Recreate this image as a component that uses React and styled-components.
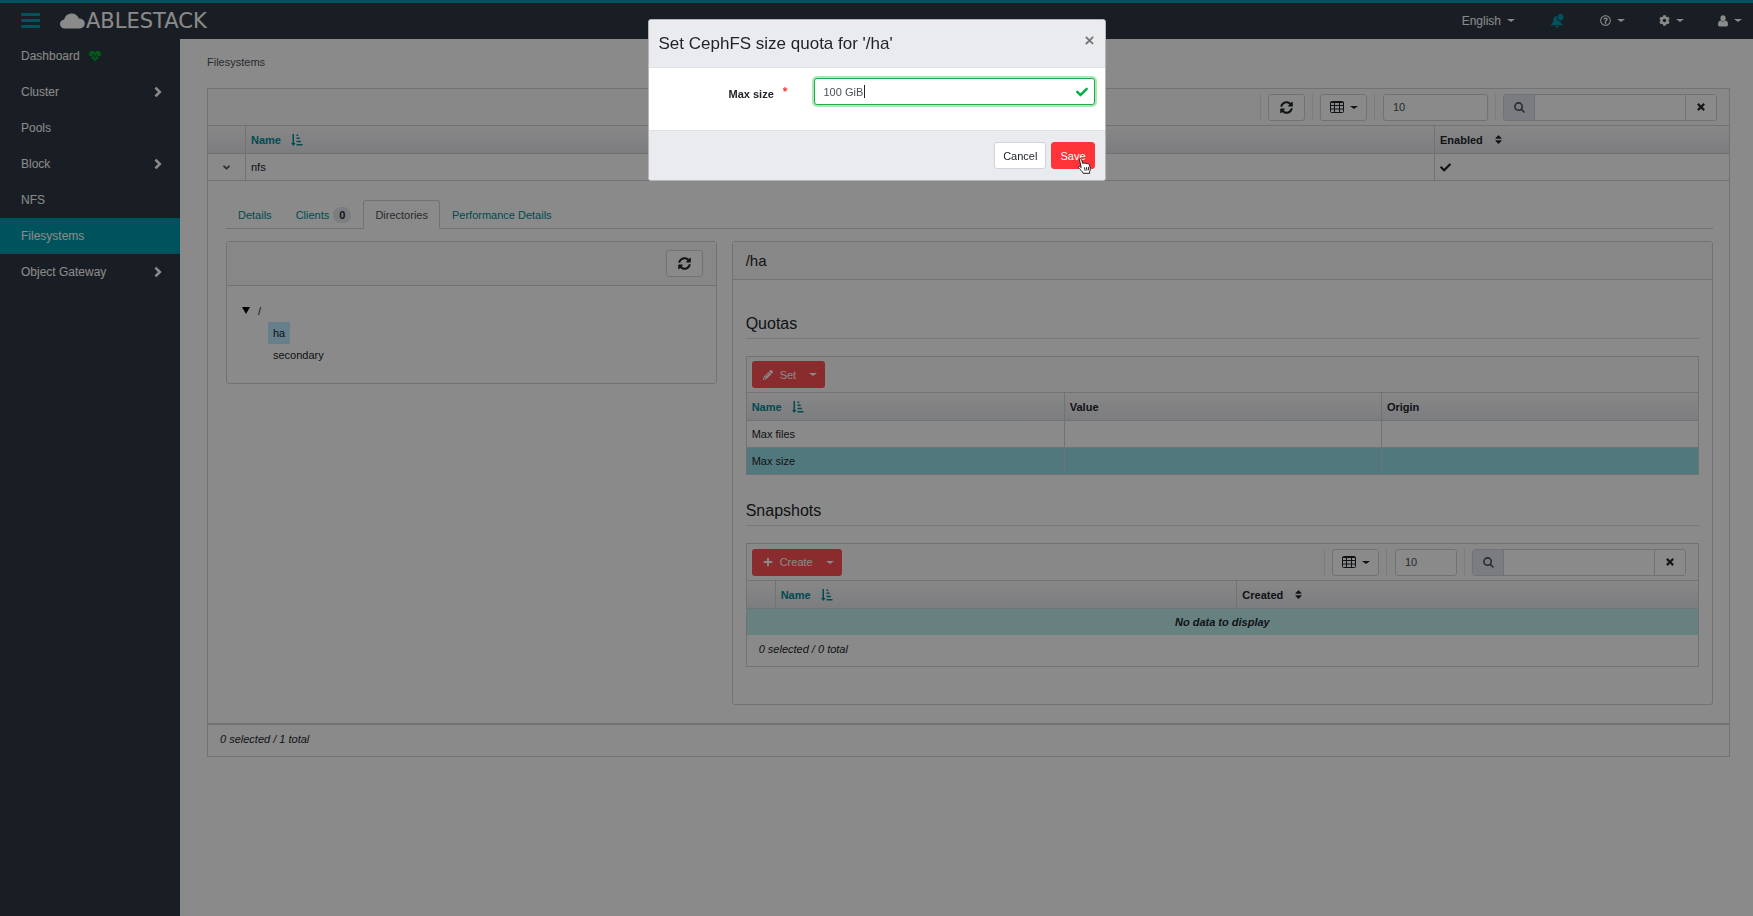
import React from 'react';
import styled, { createGlobalStyle, css } from 'styled-components';
import {
  FaHeartbeat, FaSyncAlt, FaRegQuestionCircle, FaCog, FaCheck, FaSort,
  FaPencilAlt, FaPlus, FaTimes, FaAngleDown,
} from 'react-icons/fa';

const c = {
  teal: '#0098aa',
  link: '#008a96',
  dark: '#2f3944',
  border: '#d0d5da',
  text: '#212529',
  danger: '#ff5056',
};

const GlobalStyle = createGlobalStyle`
  *, *::before, *::after { box-sizing: border-box; }
  body {
    margin: 0;
    background: #fff;
    color: ${c.text};
    font: 11px/16px "Liberation Sans", Arial, sans-serif;
  }
  button, input { font: inherit; color: inherit; margin: 0; }
  ul { list-style: none; margin: 0; padding: 0; }
  a { text-decoration: none; }
  svg { display: block; flex: none; }
`;

const Page = styled.div`
  display: flex;
  flex-direction: column;
  min-height: 100vh;
`;

/* ---- top bar ---- */
const TopBar = styled.header`
  display: flex;
  align-items: center;
  height: 38px;
  padding: 0 11px 0 21px;
  border-top: 3px solid ${c.teal};
  background: ${c.dark};
  color: #fff;
`;
const MenuToggle = styled.button`
  display: flex;
  flex-direction: column;
  gap: 3px;
  width: 19px;
  padding: 0;
  border: 0;
  background: none;
  span { height: 3px; background: ${c.teal}; border-radius: 1px; }
`;
const Brand = styled.a`
  display: flex;
  align-items: center;
  gap: 1px;
  margin: 0 auto 0 20px;
  color: #fff;
  font: 21px/24px "DejaVu Sans", sans-serif;
`;
const TopNav = styled.nav`
  display: flex;
  align-items: center;
  font-size: 12px;
`;
const TopItem = styled.button`
  display: flex;
  align-items: center;
  gap: 6px;
  height: 24px;
  margin-left: ${(p) => (p.$wide ? 36 : 34)}px;
  padding: 0;
  border: 0;
  background: none;
  color: ${(p) => (p.$accent ? c.teal : '#fff')};
`;
const Caret = styled.span`
  border: 0 solid transparent;
  border-width: 3px 4px 0;
  border-top-color: currentColor;
`;

/* ---- side bar ---- */
const Columns = styled.div`
  display: flex;
  flex: 1;
`;
const SideBar = styled.nav`
  flex: 0 0 180px;
  background: ${c.dark};
`;
const SideLink = styled.a`
  display: flex;
  align-items: center;
  gap: 9px;
  height: 36px;
  padding: 0 18px 0 21px;
  font-size: 12px;
  color: #fff;
  background: ${(p) => (p.$active ? c.teal : 'transparent')};
  svg.end { margin-left: auto; }
`;

/* ---- content ---- */
const Main = styled.main`
  flex: 1;
  min-width: 0;
  padding: 14px 23px 24px 27px;
  border-top: 1px solid ${c.dark};
`;
const Breadcrumb = styled.div`
  height: 35px;
  color: #495057;
  line-height: 18px;
`;
const TableBox = styled.section`
  border: 1px solid ${c.border};
  border-bottom-width: ${(p) => (p.$flush ? 0 : 1)}px;
`;
const ToolBar = styled.div`
  display: flex;
  align-items: center;
  justify-content: ${(p) => (p.$end ? 'flex-end' : 'space-between')};
  height: ${(p) => (p.$compact ? 36 : 37)}px;
  padding: 0 12px 0 5px;
  background: #fcfcfc;
  border-bottom: 1px solid ${c.border};
`;
const Tools = styled.div`
  display: flex;
  align-items: center;
  gap: 7px;
`;
const Divider = styled.span`
  width: 1px;
  height: 27px;
  background: #e2e6ea;
`;
const Button = styled.button`
  display: inline-flex;
  align-items: center;
  justify-content: center;
  gap: 6px;
  height: 27px;
  width: ${(p) => (p.$width ? `${p.$width}px` : 'auto')};
  padding: 0 8px;
  border: 1px solid ${c.border};
  border-radius: 3px;
  background: #fff;
  color: #212529;
`;
const PrimaryButton = styled(Button)`
  border-color: #ff3438;
  background: #ff3438;
  color: #fff;
`;
const PageSize = styled.input`
  width: ${(p) => p.$width}px;
  height: 27px;
  padding: 0 9px;
  border: 1px solid ${c.border};
  border-radius: 3px;
  background: #fff;
  color: #495057;
  margin-left: 1px;
`;
const SearchGroup = styled.div`
  display: flex;
  height: 27px;
  border: 1px solid ${c.border};
  border-radius: 3px;
  overflow: hidden;
  label {
    display: flex;
    align-items: center;
    justify-content: center;
    width: 31px;
    background: #e3e5ea;
    color: #495057;
    border-right: 1px solid ${c.border};
  }
  input { width: 150px; border: 0; padding: 0 8px; background: #fff; }
  button {
    display: flex;
    align-items: center;
    justify-content: center;
    width: 31px;
    padding: 0;
    border: 0;
    border-left: 1px solid ${c.border};
    background: #fff;
  }
`;
const SplitButton = styled.div`
  display: flex;
  height: 27px;
  border-radius: 3px;
  overflow: hidden;
  button {
    display: flex;
    align-items: center;
    gap: 7px;
    padding: 0 6px 0 11px;
    border: 0;
    background: ${c.danger};
    color: #fff;
  }
  button + button { padding: 0 8px 0 7px; }
`;
const Table = styled.table`
  width: 100%;
  table-layout: fixed;
  border-collapse: separate;
  border-spacing: 0;
`;
const Th = styled.th`
  height: 28px;
  width: ${(p) => (p.$width ? `${p.$width}px` : 'auto')};
  padding: 0 5px;
  text-align: left;
  border-bottom: 1px solid ${c.border};
  background: linear-gradient(#fafafa, #e6e7ec);
  color: ${(p) => (p.$sorted ? c.link : c.text)};
  & + & { border-left: 1px solid ${c.border}; }
`;
const SortLabel = styled.span`
  display: inline-flex;
  align-items: center;
  gap: 10px;
`;
const Td = styled.td`
  height: 27px;
  padding: ${(p) => (p.$details ? '0' : '0 5px')};
  border-bottom: 1px solid ${c.border};
  & + & { border-left: 1px solid ${c.border}; }
`;
const Tr = styled.tr`
  background: ${(p) => (p.$selected ? '#96dee7' : '#fff')};
`;
const EmptyCell = styled.td`
  height: 26px;
  padding: 0;
  background: #bfedec;
  text-align: center;
  font-weight: bold;
  font-style: italic;
`;
const Expander = styled.button`
  display: flex;
  justify-content: center;
  width: 100%;
  padding: 0;
  border: 0;
  background: none;
  color: #495057;
`;
const TableFooter = styled.div`
  height: 31px;
  padding: 6px 12px 0;
  font-style: italic;
`;

/* ---- expanded row ---- */
const Details = styled.div`
  padding: 19px 16px 18px 18px;
  border-bottom: 1px solid ${c.border};
`;
const Tabs = styled.div`
  display: flex;
  height: 29px;
  border-bottom: 1px solid ${c.border};
`;
const Tab = styled.button`
  display: flex;
  align-items: center;
  gap: 4px;
  height: 29px;
  padding: 0 11px;
  border: 1px solid transparent;
  border-radius: 3px 3px 0 0;
  background: none;
  color: ${c.link};
  ${(p) => p.$active && css`
    color: #495057;
    background: #fff;
    border-color: ${c.border} ${c.border} #fff;
  `}
`;
const Badge = styled.span`
  padding: 0 6px;
  border-radius: 8px;
  background: #e6e7ec;
  color: ${c.text};
  font-weight: bold;
`;
const Cards = styled.div`
  display: grid;
  grid-template-columns: minmax(0, 1fr) minmax(0, 2fr);
  gap: 15px;
  align-items: start;
  margin-top: 12px;
`;
const Card = styled.section`
  border: 1px solid ${c.border};
  border-radius: 3px;
`;
const CardHeader = styled.header`
  display: flex;
  align-items: center;
  justify-content: ${(p) => (p.$end ? 'flex-end' : 'flex-start')};
  padding: ${(p) => (p.$end ? 8 : 9)}px 13px;
  border-bottom: 1px solid ${c.border};
  background: #f9f9f9;
  font-size: 15px;
  line-height: 19px;
`;
const CardBody = styled.div`
  padding: 34px 13px 37px;
`;
const Legend = styled.h2`
  margin: 0 0 17px;
  padding-bottom: 5px;
  border-bottom: 1px solid #dadee2;
  font-size: 16px;
  font-weight: normal;
  line-height: 19px;
`;
const Group = styled.div`
  & + & { margin-top: 26px; }
`;
const Tree = styled.ul`
  padding: 13px 15px 17px;
  line-height: 22px;
  ul { padding-left: 26px; }
`;
const TreeNode = styled.button`
  display: inline-flex;
  align-items: center;
  gap: 8px;
  height: 22px;
  padding: ${(p) => (p.$root ? '0' : '0 5px')};
  border: 0;
  background: ${(p) => (p.$selected ? '#beebff' : 'none')};
  color: ${c.text};
`;
const Arrow = styled.span`
  border: 4px solid transparent;
  border-top: 7px solid #000;
  border-bottom: 0;
`;

/* ---- dialog ---- */
const Backdrop = styled.div`
  position: fixed;
  inset: 0;
  display: flex;
  align-items: flex-start;
  justify-content: center;
  padding-top: 19px;
  background: rgba(0, 0, 0, 0.46);
`;
const Dialog = styled.form`
  width: 458px;
  border: 1px solid #b4b6ba;
  border-radius: 3px;
  background: #fff;
  overflow: hidden;
`;
const DialogHeader = styled.header`
  display: flex;
  justify-content: space-between;
  height: 48px;
  padding: 11px 10px;
  background: #eaebef;
  border-bottom: 1px solid #dee2e6;
  h1 {
    margin: 0;
    font-size: 17px;
    font-weight: 500;
    line-height: 26px;
  }
`;
const Close = styled.button`
  height: 20px;
  padding: 0;
  border: 0;
  background: none;
  color: #777;
  font-size: 17px;
  font-weight: bold;
  line-height: 20px;
`;
const DialogBody = styled.div`
  display: flex;
  align-items: flex-start;
  padding: 10px 10px 25px 80px;
  label {
    width: 85px;
    padding-top: 8px;
    font-weight: bold;
  }
  sup { margin-left: 6px; color: #ff3438; font-size: 12px; line-height: 0; vertical-align: 2px; }
`;
const ValidField = styled.div`
  position: relative;
  flex: 1;
  input {
    display: block;
    width: 100%;
    height: 27px;
    padding: 0 9px;
    border: 1px solid #28a745;
    border-radius: 3px;
    outline: 0;
    box-shadow: 0 0 0 2px rgba(40, 200, 80, 0.4);
    color: #495057;
  }
  svg { position: absolute; right: 7px; top: 8px; color: #00b140; }
`;
const TextCaret = styled.i`
  position: absolute;
  left: 50px;
  top: 7px;
  width: 1px;
  height: 13px;
  background: #212529;
`;
const DialogFooter = styled.footer`
  display: flex;
  align-items: center;
  justify-content: flex-end;
  gap: 5px;
  height: 50px;
  padding: 0 10px;
  border-top: 1px solid #dee2e6;
  background: #eaebef;
`;
const SaveWrap = styled.div`
  position: relative;
  display: flex;
  svg { position: absolute; left: 26px; top: 16px; }
`;

/* ---- drawings ---- */
const Cloud = () => (
  <svg width="25" height="16" viewBox="0 0 25 16" fill="currentColor" aria-hidden="true">
    <path d="M5 15.500C2 15.500 0 13.500 0 11C0 8.500 1.800 6.800 4.200 6.500C5 2.800 8 0.500 11.800 0.500C15.300 0.500 17.800 2.500 18.800 5.500C22.500 5.600 24.800 7.600 24.800 10.600C24.800 13.500 22.700 15.500 19.800 15.500Z" />
  </svg>
);
const Bell = () => (
  <svg width="13" height="14" viewBox="0 0 13 14" fill="currentColor" aria-hidden="true">
    <path d="M5.500 2C3 2.300 2.200 4.200 2.100 6.500C2 8.700 1.300 9.600 0 10.600V11.300H11.500V10.600C10.300 9.700 9.600 8.900 9.400 7.300C7 7.400 5.300 5.200 5.900 3Z" />
    <path d="M4.200 12H7.400C7.400 13 6.700 13.600 5.800 13.600S4.200 13 4.200 12Z" />
    <ellipse cx="9.600" cy="3.200" rx="2.800" ry="3.100" />
  </svg>
);
const User = () => (
  <svg width="10" height="12" viewBox="0 0 10 12" fill="currentColor" aria-hidden="true">
    <ellipse cx="5" cy="3.200" rx="2.600" ry="3" />
    <path d="M2.400 5.400C3.800 6.900 6.200 6.900 7.600 5.400C9.300 5.700 10 7.400 10 9.400C10 10.800 9.200 11.500 8 11.500H2C0.800 11.500 0 10.800 0 9.400C0 7.400 0.700 5.700 2.400 5.400Z" />
  </svg>
);
const Chevron = () => (
  <svg className="end" width="8" height="12" viewBox="0 0 8 12" fill="none" stroke="currentColor" strokeWidth="2.600" aria-hidden="true">
    <path d="M1.400 1.600L5.800 6L1.400 10.400" />
  </svg>
);
const SortAsc = () => (
  <svg width="12" height="12" viewBox="0 0 12 12" fill="currentColor" aria-hidden="true">
    <path d="M1.500 0H3V9H4.600L2.250 12L0 9H1.500Z" />
    <path d="M5.500 0.500H7.200V2H5.500ZM5.500 3.600H8.600V5.100H5.500ZM5.500 6.700H10V8.200H5.500ZM5.500 9.900H11.500V11.400H5.500Z" />
  </svg>
);
const Grid = () => (
  <svg width="14" height="12" viewBox="0 0 14 12" fill="none" stroke="currentColor" aria-hidden="true">
    <rect x="0.500" y="0.500" width="13" height="11" rx="1" />
    <path d="M0.500 1.500H13.500M0.500 4.500H13.500M0.500 8H13.500M4.500 1V11.500M9.500 1V11.500" />
  </svg>
);
const Magnifier = () => (
  <svg width="11" height="11" viewBox="0 0 11 11" fill="none" stroke="currentColor" strokeWidth="1.600" strokeLinecap="round" aria-hidden="true">
    <circle cx="4.600" cy="4.600" r="3.700" />
    <path d="M7.400 7.400L10 10" />
  </svg>
);
const HandCursor = () => (
  <svg width="15" height="16" viewBox="0 0 15 16" aria-hidden="true">
    <path
      d="M4.200 9.600L2.500 1.900C2.300 0.400 4.200 0.200 4.600 1.500L5.800 5.600C6.200 4.900 7.700 4.900 8 5.700C8.500 5 9.900 5.100 10.200 5.900C11 5.400 12.200 5.800 12.400 6.700L13.300 10.200C13.600 11.500 12.900 12.700 12.600 13.700V15.300H6.200C5.300 13.100 3.500 12.100 1.700 10.100C0.700 8.800 2.300 7.900 3.200 8.700Z"
      fill="#fff" stroke="#222" strokeWidth="1"
    />
    <path d="M7.500 9.300L8.100 12.700M9.500 9.200L9.900 12.600M11.400 9L11.700 12.300" stroke="#222" fill="none" />
  </svg>
);

const Search = ({ id }) => (
  <SearchGroup>
    <label htmlFor={id} aria-label="Search"><Magnifier /></label>
    <input id={id} type="text" />
    <button type="button" aria-label="Clear search"><FaTimes size={10} stroke="currentColor" strokeWidth="30" /></button>
  </SearchGroup>
);
const ColumnsButton = () => (
  <Button type="button" $width={47} aria-label="Columns"><Grid /><Caret /></Button>
);
const SortedName = () => (
  <SortLabel>Name <SortAsc /></SortLabel>
);

const menu = [
  { label: 'Dashboard', health: true },
  { label: 'Cluster', sub: true },
  { label: 'Pools' },
  { label: 'Block', sub: true },
  { label: 'NFS' },
  { label: 'Filesystems', active: true },
  { label: 'Object Gateway', sub: true },
];

function QuotaTable() {
  return (
    <TableBox $flush>
      <ToolBar $compact>
        <SplitButton>
          <button type="button"><FaPencilAlt size={10} />Set</button>
          <button type="button" aria-label="More quota actions"><Caret /></button>
        </SplitButton>
      </ToolBar>
      <Table>
        <thead>
          <tr><Th $sorted><SortedName /></Th><Th>Value</Th><Th>Origin</Th></tr>
        </thead>
        <tbody>
          <Tr><Td>Max files</Td><Td /><Td /></Tr>
          <Tr $selected><Td>Max size</Td><Td /><Td /></Tr>
        </tbody>
      </Table>
    </TableBox>
  );
}

function SnapshotTable() {
  return (
    <TableBox>
      <ToolBar>
        <SplitButton>
          <button type="button"><FaPlus size={10} />Create</button>
          <button type="button" aria-label="More snapshot actions"><Caret /></button>
        </SplitButton>
        <Tools>
          <Divider /><ColumnsButton />
          <Divider /><PageSize $width={62} aria-label="Rows per page" defaultValue="10" />
          <Divider /><Search id="snapshot-search" />
        </Tools>
      </ToolBar>
      <Table>
        <thead>
          <tr>
            <Th $width={28} aria-label="Selection" />
            <Th $sorted><SortedName /></Th>
            <Th><SortLabel>Created <FaSort size={11} /></SortLabel></Th>
          </tr>
        </thead>
        <tbody>
          <tr><EmptyCell colSpan={3}>No data to display</EmptyCell></tr>
        </tbody>
      </Table>
      <TableFooter>0 selected / 0 total</TableFooter>
    </TableBox>
  );
}

export default function App() {
  return (
    <>
      <GlobalStyle />
      <Page>
        <TopBar>
          <MenuToggle type="button" aria-label="Toggle navigation"><span /><span /><span /></MenuToggle>
          <Brand href="#"><Cloud />ABLESTACK</Brand>
          <TopNav>
            <TopItem type="button">English<Caret /></TopItem>
            <TopItem type="button" $wide $accent aria-label="Notifications"><Bell /></TopItem>
            <TopItem type="button" $wide aria-label="Help"><FaRegQuestionCircle size={11} /><Caret /></TopItem>
            <TopItem type="button" aria-label="Settings"><FaCog size={11} /><Caret /></TopItem>
            <TopItem type="button" aria-label="Account"><User /><Caret /></TopItem>
          </TopNav>
        </TopBar>
        <Columns>
          <SideBar>
            <ul>
              {menu.map((m) => (
                <li key={m.label}>
                  <SideLink href="#" $active={m.active}>
                    {m.label}
                    {m.health && <FaHeartbeat size={12} color="#00a832" />}
                    {m.sub && <Chevron />}
                  </SideLink>
                </li>
              ))}
            </ul>
          </SideBar>
          <Main>
            <Breadcrumb>Filesystems</Breadcrumb>
            <TableBox>
              <ToolBar $end>
                <Tools>
                  <Divider /><Button type="button" $width={37} aria-label="Refresh"><FaSyncAlt size={13} /></Button>
                  <Divider /><ColumnsButton />
                  <Divider /><PageSize $width={105} aria-label="Rows per page" defaultValue="10" />
                  <Divider /><Search id="fs-search" />
                </Tools>
              </ToolBar>
              <Table>
                <thead>
                  <tr>
                    <Th $width={37} aria-label="Expand" />
                    <Th $sorted><SortedName /></Th>
                    <Th $width={295}><SortLabel>Enabled <FaSort size={11} /></SortLabel></Th>
                  </tr>
                </thead>
                <tbody>
                  <Tr>
                    <Td><Expander type="button" aria-label="Collapse nfs"><FaAngleDown size={11} /></Expander></Td>
                    <Td>nfs</Td>
                    <Td><FaCheck size={11} /></Td>
                  </Tr>
                  <Tr>
                    <Td colSpan={3} $details>
                      <Details>
                        <Tabs>
                          <Tab type="button">Details</Tab>
                          <Tab type="button">Clients <Badge>0</Badge></Tab>
                          <Tab type="button" $active>Directories</Tab>
                          <Tab type="button">Performance Details</Tab>
                        </Tabs>
                        <Cards>
                          <Card>
                            <CardHeader $end>
                              <Button type="button" $width={37} aria-label="Reload tree"><FaSyncAlt size={13} /></Button>
                            </CardHeader>
                            <Tree>
                              <li>
                                <TreeNode type="button" $root><Arrow />/</TreeNode>
                                <ul>
                                  <li><TreeNode type="button" $selected>ha</TreeNode></li>
                                  <li><TreeNode type="button">secondary</TreeNode></li>
                                </ul>
                              </li>
                            </Tree>
                          </Card>
                          <Card>
                            <CardHeader>/ha</CardHeader>
                            <CardBody>
                              <Group><Legend>Quotas</Legend><QuotaTable /></Group>
                              <Group><Legend>Snapshots</Legend><SnapshotTable /></Group>
                            </CardBody>
                          </Card>
                        </Cards>
                      </Details>
                    </Td>
                  </Tr>
                </tbody>
              </Table>
              <TableFooter>0 selected / 1 total</TableFooter>
            </TableBox>
          </Main>
        </Columns>
      </Page>
      <Backdrop>
        <Dialog role="dialog" aria-labelledby="dialog-title" onSubmit={(e) => e.preventDefault()}>
          <DialogHeader>
            <h1 id="dialog-title">Set CephFS size quota for '/ha'</h1>
            <Close type="button" aria-label="Close">×</Close>
          </DialogHeader>
          <DialogBody>
            <label htmlFor="max-size">Max size <sup>*</sup></label>
            <ValidField>
              <input id="max-size" type="text" defaultValue="100 GiB" />
              <TextCaret />
              <FaCheck size={12} />
            </ValidField>
          </DialogBody>
          <DialogFooter>
            <Button type="button">Cancel</Button>
            <SaveWrap>
              <PrimaryButton type="submit">Save</PrimaryButton>
              <HandCursor />
            </SaveWrap>
          </DialogFooter>
        </Dialog>
      </Backdrop>
    </>
  );
}
